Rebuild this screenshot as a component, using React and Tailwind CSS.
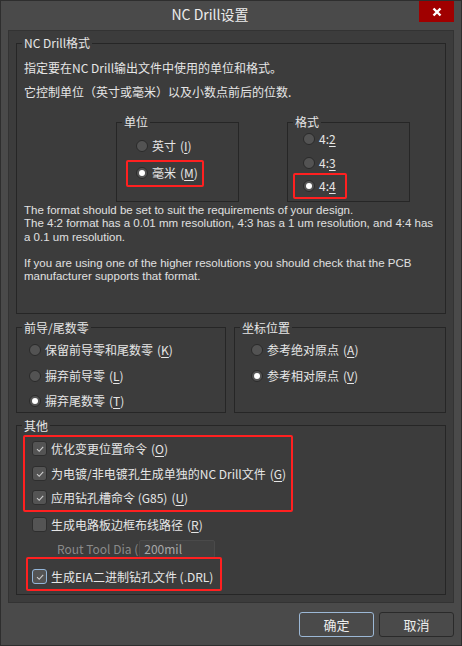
import React from 'react';

const Radio = ({ checked }) => (
  <span className="w-[12px] h-[12px] rounded-full bg-[#535353] border border-[#2a2a2a] flex items-center justify-center shrink-0">
    {checked && <span className="w-[6px] h-[6px] rounded-full bg-white" />}
  </span>
);

const Check = ({ checked, focus }) => (
  <span
    className={`w-[15px] h-[15px] rounded-[3px] bg-[#545454] border ${
      focus ? 'border-[#93b6da]' : 'border-[#2e2e2e]'
    } flex items-center justify-center shrink-0`}
  >
    {checked && (
      <svg viewBox="0 0 10 10" className="w-[10px] h-[10px]">
        <path d="M2 5.2 L4.2 7.3 L8.2 2.8" stroke="#cfcfcf" strokeWidth="1.1" fill="none" />
      </svg>
    )}
  </span>
);

const Key = ({ k }) => (
  <span className="ml-[4px]">
    (<span className="underline underline-offset-2">{k}</span>)
  </span>
);

const Group = ({ title, className = '', children }) => (
  <fieldset className={`border border-[#262626] ${className}`}>
    <legend className="ml-[5px] px-[2px] leading-[16px]">{title}</legend>
    {children}
  </fieldset>
);

const RadioRow = ({ checked, label, k, className = '' }) => (
  <div className={`h-[18px] flex items-center gap-[4px] ${className}`}>
    <Radio checked={checked} />
    <span>
      {label}
      {k && <Key k={k} />}
    </span>
  </div>
);

const CheckRow = ({ checked, focus, label, k, className = '' }) => (
  <div className={`h-[20px] flex items-center gap-[4px] ${className}`}>
    <Check checked={checked} focus={focus} />
    <span>
      {label}
      {k && <Key k={k} />}
    </span>
  </div>
);

const App = () => {
  return (
    <div className="w-[462px] h-[646px] bg-[#4a4a4a] border border-[#2e2e2e] text-[12px] text-[#e6e6e6] font-['Noto_Sans_CJK_SC',sans-serif] flex flex-col">
      {/* Title bar */}
      <div className="h-[29px] flex">
        <div className="flex-1 flex items-center justify-center text-[14px] text-[#ececec] pb-[2px]">
          NC Drill设置
        </div>
        <div className="w-[35px] h-[21px] mr-[7px] bg-[#a00000] flex items-center justify-center">
          <svg viewBox="0 0 10 10" className="w-[10px] h-[10px]">
            <path d="M1.5 1.5 L8.5 8.5 M8.5 1.5 L1.5 8.5" stroke="white" strokeWidth="2.4" />
          </svg>
        </div>
      </div>

      {/* Main panel */}
      <div className="mx-[7px] h-[573px] border border-[#333333] bg-[#3c3c3c] pt-[4px] px-[7px]">
        <Group title="NC Drill格式" className="pb-[29px]">
          <div className="pl-[7px]">
            <div className="mt-[9px] leading-[16px]">指定要在NC Drill输出文件中使用的单位和格式。</div>
            <div className="mt-[8px] leading-[16px]">它控制单位（英寸或毫米）以及小数点前后的位数.</div>
          </div>

          <div className="flex mt-[14px] ml-[99px] gap-[48px]">
            <Group title="单位" className="w-[123px] pb-[19px]">
              <div className="pl-[19px] flex flex-col">
                <RadioRow className="mt-[7px]" label="英寸" k="I" />
                <div className="relative mt-[9px]">
                  <RadioRow checked label="毫米" k="M" />
                  <div className="absolute left-[-10px] top-[-4px] w-[78px] h-[27px] border-2 border-[#ff2020] rounded-[2px]" />
                </div>
              </div>
            </Group>
            <Group title="格式" className="w-[123px] pb-[6px]">
              <div className="pl-[15px] flex flex-col">
                <RadioRow label={<span>4:<u className="underline-offset-2">2</u></span>} />
                <RadioRow className="mt-[6px]" label={<span>4:<u className="underline-offset-2">3</u></span>} />
                <div className="relative mt-[5px]">
                  <RadioRow checked label={<span>4:<u className="underline-offset-2">4</u></span>} />
                  <div className="absolute left-[-10px] top-[-4px] w-[54px] h-[26px] border-2 border-[#ff2020] rounded-[2px]" />
                </div>
              </div>
            </Group>
          </div>

          <div className="pl-[7px] mt-[2px] leading-[13.3px] text-[11.5px] text-[#e0e0e0] whitespace-nowrap font-['Liberation_Sans',sans-serif]">
            <div>The format should be set to suit the requirements of your design.</div>
            <div>The 4:2 format has a 0.01 mm resolution, 4:3 has a 1 um resolution, and 4:4 has</div>
            <div>a 0.1 um resolution.</div>
            <div className="h-[13.3px]" />
            <div>If you are using one of the higher resolutions you should check that the PCB</div>
            <div>manufacturer supports that format.</div>
          </div>
        </Group>

        <div className="flex gap-[8px] mt-[6px]">
          <Group title="前导/尾数零" className="w-[210px] pb-[2px]">
            <div className="pl-[12px] flex flex-col">
              <RadioRow className="mt-[5px]" label="保留前导零和尾数零" k="K" />
              <RadioRow className="mt-[8px]" label="摒弃前导零" k="L" />
              <RadioRow checked className="mt-[7px]" label="摒弃尾数零" k="T" />
            </div>
          </Group>
          <Group title="坐标位置" className="flex-1">
            <div className="pl-[16px] flex flex-col">
              <RadioRow className="mt-[5px]" label="参考绝对原点" k="A" />
              <RadioRow checked className="mt-[8px]" label="参考相对原点" k="V" />
            </div>
          </Group>
        </div>

        <Group title="其他" className="mt-[5px] pb-[7px]">
          <div className="relative pl-[15px] mt-[5px]">
            <CheckRow checked label="优化变更位置命令" k="O" />
            <CheckRow checked className="mt-[5px]" label="为电镀/非电镀孔生成单独的NC Drill文件" k="G" />
            <CheckRow checked className="mt-[4px]" label="应用钻孔槽命令 (G85)" k="U" />
            <div className="absolute left-[6px] top-[-4px] w-[270px] h-[77px] border-2 border-[#ff2020] rounded-[2px]" />
          </div>
          <div className="pl-[15px]">
            <CheckRow className="mt-[7px]" label="生成电路板边框布线路径" k="R" />
          </div>
          <div className="pl-[40px] mt-[4px] h-[20px] flex items-center text-[#8a8a8a] whitespace-pre">
            <span>Rout Tool Dia (</span>
            <div className="ml-[1px] w-[76px] h-[18px] bg-[#414141] border border-[#4a4a4a] rounded-[2px] flex items-center pl-[4px] text-[#a8a8a8]">
              200mil
            </div>
          </div>
          <div className="relative pl-[15px] mt-[8px]">
            <CheckRow checked focus label="生成EIA二进制钻孔文件 (.DRL)" />
            <div className="absolute left-[9px] top-[-10px] w-[196px] h-[34px] border-2 border-[#ff2020] rounded-[2px]" />
          </div>
        </Group>
      </div>

      {/* Buttons */}
      <div className="flex justify-end gap-[5px] mr-[7px] mt-[9px]">
        <button className="w-[75px] h-[25px] rounded-[3px] bg-[#4a4a4a] border border-[#9cb8d6] text-[13px] text-[#eeeeee]">
          确定
        </button>
        <button className="w-[75px] h-[25px] rounded-[3px] bg-[#4a4a4a] border border-[#2a2a2a] text-[13px] text-[#eeeeee]">
          取消
        </button>
      </div>
    </div>
  );
};

export default App;
